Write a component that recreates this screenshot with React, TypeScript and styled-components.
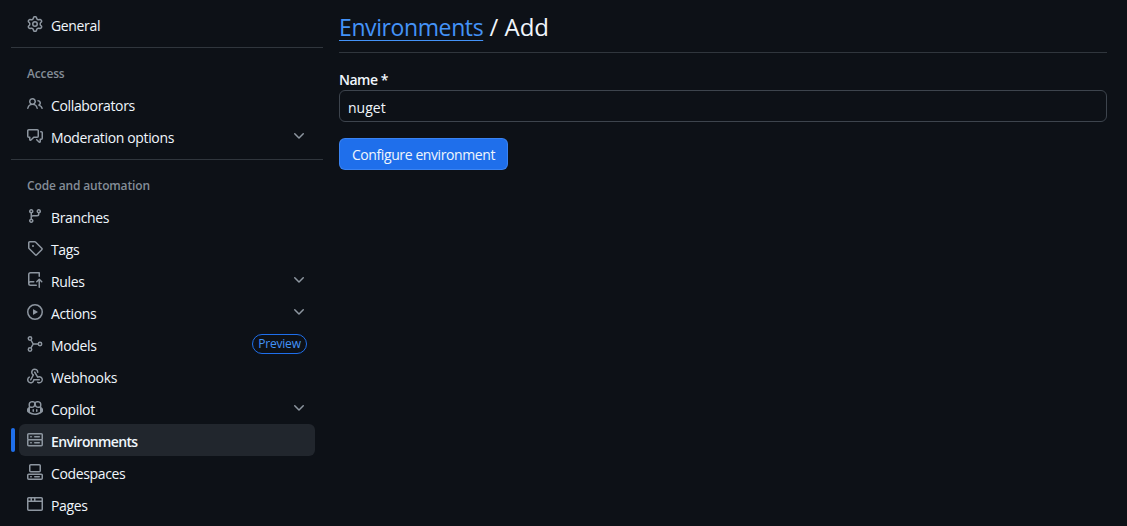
import * as React from 'react';
import styled, { createGlobalStyle } from 'styled-components';

const Global = createGlobalStyle`
  html, body {
    margin: 0;
    height: 100%;
    overflow: hidden;
    background: #0d1117;
  }
  body {
    font-family: "Open Sans", "Liberation Sans", sans-serif;
    font-size: 14px;
    color: #f0f6fc;
  }
`;

const Page = styled.div`
  height: 526px;
  display: flex;
  padding: 8px 20px 0 11px;
  box-sizing: border-box;
  overflow: hidden;
`;

const Sidebar = styled.nav`
  width: 312px;
  flex-shrink: 0;
  display: flex;
  flex-direction: column;
`;

const Divider = styled.div`
  height: 1px;
  flex-shrink: 0;
  background: #30363d;
  margin-top: 7px;
`;

const SectionTitle = styled.div`
  height: 40px;
  flex-shrink: 0;
  padding: 19px 0 0 16px;
  box-sizing: border-box;
  font-size: 12px;
  line-height: 14px;
  font-weight: 600;
  letter-spacing: -0.15px;
  color: #848d97;
`;

const Row = styled.div<{ $active?: boolean }>`
  position: relative;
  height: 32px;
  flex-shrink: 0;
  margin: 0 8px;
  padding: 0 8px;
  display: flex;
  align-items: center;
  gap: 8px;
  border-radius: 6px;
  background: ${(p) => (p.$active ? '#21262d' : 'transparent')};
  font-weight: ${(p) => (p.$active ? 600 : 400)};
  letter-spacing: ${(p) => (p.$active ? '-0.65px' : '-0.35px')};
`;

const ActiveBar = styled.span`
  position: absolute;
  left: -8px;
  top: 4px;
  width: 4px;
  height: 24px;
  border-radius: 6px;
  background: #1f6feb;
`;

const IconSvg = styled.svg`
  width: 16px;
  height: 16px;
  display: block;
  flex-shrink: 0;
  fill: #8d96a0;
`;

const RowLabel = styled.span`
  flex: 1;
  padding-top: 2px;
`;

const PreviewBadge = styled.span`
  height: 20px;
  width: 55px;
  box-sizing: border-box;
  text-align: center;
  line-height: 18px;
  border: 1px solid #1f6feb;
  border-radius: 10px;
  font-size: 12px;
  font-weight: 500;
  letter-spacing: -0.2px;
  color: #4493f8;
`;

const Main = styled.main`
  flex: 1;
  margin-left: 16px;
  margin-top: -8px;
`;

const Heading = styled.h1`
  margin: 0;
  height: 53px;
  box-sizing: border-box;
  padding-top: 9px;
  font-size: 24px;
  line-height: 36px;
  font-weight: 400;
  border-bottom: 1px solid #30363d;
`;

const HeadingLink = styled.a`
  font-size: 23px;
  letter-spacing: -0.4px;
  color: #4493f8;
  text-decoration: underline;
  text-underline-offset: 4px;
  text-decoration-thickness: 1px;
`;

const Form = styled.form`
  padding-top: 17px;
`;

const Label = styled.label`
  display: block;
  font-weight: 600;
  line-height: 20px;
  letter-spacing: -0.5px;
`;

const TextInput = styled.input`
  display: block;
  width: 100%;
  height: 32px;
  box-sizing: border-box;
  padding: 2px 8px 0;
  margin: 0;
  background: #0d1117;
  border: 1px solid #3d444d;
  border-radius: 6px;
  color: #f0f6fc;
  font: inherit;
  outline: none;
`;

const SubmitButton = styled.button`
  display: block;
  margin-top: 16px;
  height: 32px;
  width: 169px;
  padding: 0;
  background: #1f6feb;
  border: 1px solid rgba(110, 170, 255, 0.35);
  border-radius: 6px;
  color: #f0f6fc;
  font: inherit;
  font-weight: 500;
  letter-spacing: -0.4px;
`;

const Icon = ({ d }: { d: string }) => (
  <IconSvg viewBox="0 0 16 16">
    <path d={d} />
  </IconSvg>
);

const ModelsIcon = () => (
  <IconSvg viewBox="0 0 16 16" style={{ fill: 'none', stroke: '#8d96a0', strokeWidth: 1.5 }}>
    <circle cx="3" cy="2.5" r="1.7" />
    <circle cx="3" cy="13.5" r="1.7" />
    <circle cx="13" cy="8" r="1.7" />
    <path d="M3.9 4 6.2 8 3.9 12M6.2 8h5" />
  </IconSvg>
);

const paths = {
  gear: 'M8 0a8.2 8.2 0 0 1 .701.031C9.444.095 9.99.645 10.16 1.29l.288 1.107c.018.066.079.158.212.224.231.114.454.243.668.386.123.082.233.09.299.071l1.103-.303c.644-.176 1.392.021 1.82.63.27.385.506.792.704 1.218.315.675.111 1.422-.364 1.891l-.814.806c-.049.048-.098.147-.088.294.016.257.016.515 0 .772-.01.147.038.246.088.294l.814.806c.475.469.679 1.216.364 1.891a7.977 7.977 0 0 1-.704 1.217c-.428.61-1.176.807-1.82.63l-1.102-.302c-.067-.019-.177-.011-.3.071a5.909 5.909 0 0 1-.668.386c-.133.066-.194.158-.211.224l-.29 1.106c-.168.646-.715 1.196-1.458 1.26a8.006 8.006 0 0 1-1.402 0c-.743-.064-1.289-.614-1.458-1.26l-.289-1.106c-.018-.066-.079-.158-.212-.224a5.738 5.738 0 0 1-.668-.386c-.123-.082-.233-.09-.299-.071l-1.103.303c-.644.176-1.392-.021-1.82-.63a8.12 8.12 0 0 1-.704-1.218c-.315-.675-.111-1.422.363-1.891l.815-.806c.05-.048.098-.147.088-.294a6.214 6.214 0 0 1 0-.772c.01-.147-.038-.246-.088-.294l-.815-.806C.635 6.045.431 5.298.746 4.623a7.92 7.92 0 0 1 .704-1.217c.428-.61 1.176-.807 1.82-.63l1.102.302c.067.019.177.011.3-.071.214-.143.437-.272.668-.386.133-.066.194-.158.211-.224l.29-1.106C6.009.645 6.556.095 7.299.03 7.53.01 7.764 0 8 0Zm-.571 1.525c-.036.003-.108.036-.137.146l-.289 1.105c-.147.561-.549.967-.998 1.189-.173.086-.34.183-.5.29-.417.278-.97.423-1.529.27l-1.103-.303c-.109-.03-.175.016-.195.045-.22.312-.412.644-.573.99-.014.031-.021.11.059.19l.815.806c.411.406.562.957.53 1.456a4.709 4.709 0 0 0 0 .582c.032.499-.119 1.05-.53 1.456l-.815.806c-.081.08-.073.159-.059.19.162.346.353.677.573.989.02.03.085.076.195.046l1.102-.303c.56-.153 1.113-.008 1.53.27.161.107.328.204.501.29.447.222.85.629.997 1.189l.289 1.105c.029.109.101.143.137.146a6.6 6.6 0 0 0 1.142 0c.036-.003.108-.036.137-.146l.289-1.105c.147-.561.549-.967.998-1.189.173-.086.34-.183.5-.29.417-.278.97-.423 1.529-.27l1.103.303c.109.029.175-.016.195-.045.22-.313.411-.644.573-.99.014-.031.021-.11-.059-.19l-.815-.806c-.411-.406-.562-.957-.53-1.456a4.709 4.709 0 0 0 0-.582c-.032-.499.119-1.05.53-1.456l.815-.806c.081-.08.073-.159.059-.19a6.464 6.464 0 0 0-.573-.989c-.02-.03-.085-.076-.195-.046l-1.102.303c-.56.153-1.113.008-1.53-.27a4.44 4.44 0 0 0-.501-.29c-.447-.222-.85-.629-.997-1.189l-.289-1.105c-.029-.11-.101-.143-.137-.146a6.6 6.6 0 0 0-1.142 0ZM11 8a3 3 0 1 1-6 0 3 3 0 0 1 6 0ZM9.5 8a1.5 1.5 0 1 0-3.001.001A1.5 1.5 0 0 0 9.5 8Z',
  people: 'M2 5.5a3.5 3.5 0 1 1 5.898 2.549 5.508 5.508 0 0 1 3.034 4.084.75.75 0 1 1-1.482.235 4 4 0 0 0-7.9 0 .75.75 0 0 1-1.482-.236A5.507 5.507 0 0 1 3.102 8.05 3.493 3.493 0 0 1 2 5.5ZM11 4a3.001 3.001 0 0 1 2.22 5.018 5.01 5.01 0 0 1 2.56 3.012.749.749 0 0 1-.885.954.752.752 0 0 1-.549-.514 3.507 3.507 0 0 0-2.522-2.372.75.75 0 0 1-.574-.73v-.352a.75.75 0 0 1 .416-.672A1.5 1.5 0 0 0 11 5.5.75.75 0 0 1 11 4Zm-5.5-.5a2 2 0 1 0-.001 3.999A2 2 0 0 0 5.5 3.5Z',
  discussion: 'M1.75 1h8.5c.966 0 1.75.784 1.75 1.75v5.5A1.75 1.75 0 0 1 10.25 10H7.061l-2.574 2.573A1.458 1.458 0 0 1 2 11.543V10h-.25A1.75 1.75 0 0 1 0 8.25v-5.5C0 1.784.784 1 1.75 1ZM1.5 2.75v5.5c0 .138.112.25.25.25h1a.75.75 0 0 1 .75.75v2.19l2.72-2.72a.749.749 0 0 1 .53-.22h3.5a.25.25 0 0 0 .25-.25v-5.5a.25.25 0 0 0-.25-.25h-8.5a.25.25 0 0 0-.25.25Zm13 2a.25.25 0 0 0-.25-.25h-.5a.75.75 0 0 1 0-1.5h.5c.966 0 1.75.784 1.75 1.75v5.5A1.75 1.75 0 0 1 14.25 12H14v1.543a1.458 1.458 0 0 1-2.487 1.03L9.22 12.28a.749.749 0 0 1 .326-1.275.749.749 0 0 1 .734.215l2.22 2.22v-2.19a.75.75 0 0 1 .75-.75h1a.25.25 0 0 0 .25-.25Z',
  branch: 'M9.5 3.25a2.25 2.25 0 1 1 3 2.122V6A2.5 2.5 0 0 1 10 8.5H6a1 1 0 0 0-1 1v1.128a2.251 2.251 0 1 1-1.5 0V5.372a2.25 2.25 0 1 1 1.5 0v1.836A2.493 2.493 0 0 1 6 7h4a1 1 0 0 0 1-1v-.628A2.25 2.25 0 0 1 9.5 3.25Zm-6 0a.75.75 0 1 0 1.5 0 .75.75 0 0 0-1.5 0Zm8.25-.75a.75.75 0 1 0 0 1.5.75.75 0 0 0 0-1.5ZM4.25 12a.75.75 0 1 0 0 1.5.75.75 0 0 0 0-1.5Z',
  tag: 'M1 7.775V2.75C1 1.784 1.784 1 2.75 1h5.025c.464 0 .91.184 1.238.513l6.25 6.25a1.75 1.75 0 0 1 0 2.474l-5.026 5.026a1.75 1.75 0 0 1-2.474 0l-6.25-6.25A1.752 1.752 0 0 1 1 7.775Zm1.5 0c0 .066.026.13.073.177l6.25 6.25a.25.25 0 0 0 .354 0l5.025-5.025a.25.25 0 0 0 0-.354l-6.25-6.25a.25.25 0 0 0-.177-.073H2.75a.25.25 0 0 0-.25.25ZM6 5a1 1 0 1 1 0 2 1 1 0 0 1 0-2Z',
  repoPush: 'M1 2.5A2.5 2.5 0 0 1 3.5 0h8.75a.75.75 0 0 1 .75.75v3.5a.75.75 0 0 1-1.5 0V1.5h-8a1 1 0 0 0-1 1v6.708A2.493 2.493 0 0 1 3.5 9h3.25a.75.75 0 0 1 0 1.5H3.5a1 1 0 0 0 0 2h5.75a.75.75 0 0 1 0 1.5H3.5A2.5 2.5 0 0 1 1 11.5Zm13.23 7.79h-.001l-1.224-1.224v6.184a.75.75 0 0 1-1.5 0V9.066L10.28 10.29a.75.75 0 0 1-1.06-1.061l2.505-2.504a.75.75 0 0 1 1.06 0L15.29 9.23a.751.751 0 0 1-.018 1.042.751.751 0 0 1-1.042.018Z',
  play: 'M8 0a8 8 0 1 1 0 16A8 8 0 0 1 8 0ZM1.5 8a6.5 6.5 0 1 0 13 0 6.5 6.5 0 0 0-13 0Zm4.879-2.773 4.264 2.559a.25.25 0 0 1 0 .428l-4.264 2.559A.25.25 0 0 1 6 10.559V5.442a.25.25 0 0 1 .379-.215Z',
  webhook: 'M5.5 4.25a2.25 2.25 0 0 1 4.5 0 .75.75 0 0 0 1.5 0 3.75 3.75 0 1 0-6.14 2.889l-2.272 4.258a.75.75 0 0 0 1.324.706L7 7.25a.75.75 0 0 0-.309-1.015A2.25 2.25 0 0 1 5.5 4.25ZM7.364 3.607a.75.75 0 0 1 1.03.257l2.608 4.349a3.75 3.75 0 1 1-.628 6.785.75.75 0 0 1 .752-1.299 2.25 2.25 0 1 0-.033-3.88.75.75 0 0 1-1.03-.256L7.107 4.636a.75.75 0 0 1 .257-1.03ZM2.9 8.776A.75.75 0 0 1 2.625 9.8 2.25 2.25 0 1 0 6 11.75a.75.75 0 0 1 .75-.751h5.5a.75.75 0 0 1 0 1.5H7.425a3.751 3.751 0 1 1-5.55-3.998.75.75 0 0 1 1.024.274Z',
  copilot: 'M7.998 15.035c-4.562 0-7.873-2.914-7.998-3.749V9.338c.085-.628.677-1.686 1.588-2.065.013-.07.024-.143.036-.218.029-.183.06-.384.126-.612-.201-.508-.254-1.084-.254-1.656 0-.87.128-1.769.693-2.484.579-.733 1.494-1.124 2.724-1.261 1.206-.134 2.262.034 2.944.765.05.053.096.108.139.165.044-.057.094-.112.143-.165.682-.731 1.738-.899 2.944-.765 1.23.137 2.145.528 2.724 1.261.566.715.693 1.614.693 2.484 0 .572-.053 1.148-.254 1.656.066.228.098.429.126.612.012.076.024.148.037.218.924.385 1.522 1.471 1.591 2.095v1.872c0 .766-3.351 3.795-8.002 3.795Zm0-1.485c2.28 0 4.584-1.11 5.002-1.433V7.862l-.023-.116c-.49.21-1.075.291-1.727.291-1.146 0-2.059-.327-2.71-.991A3.222 3.222 0 0 1 8 6.303a3.24 3.24 0 0 1-.544.743c-.65.664-1.563.991-2.71.991-.652 0-1.236-.081-1.727-.291l-.023.116v4.255c.419.323 2.722 1.433 5.002 1.433ZM6.762 2.83c-.193-.206-.637-.413-1.682-.297-1.019.113-1.479.404-1.713.7-.247.312-.369.789-.369 1.554 0 .793.129 1.171.308 1.371.162.181.519.379 1.442.379.853 0 1.339-.235 1.638-.54.315-.322.527-.827.617-1.553.117-.935-.037-1.395-.241-1.614Zm4.155-.297c-1.044-.116-1.488.091-1.681.297-.204.219-.359.679-.242 1.614.091.726.303 1.231.618 1.553.299.305.784.54 1.638.54.922 0 1.28-.198 1.442-.379.179-.2.308-.578.308-1.371 0-.765-.123-1.242-.37-1.554-.233-.296-.693-.587-1.713-.7ZM6.25 9.037a.75.75 0 0 1 .75.75v1.501a.75.75 0 0 1-1.5 0V9.787a.75.75 0 0 1 .75-.75Zm4.25.75v1.501a.75.75 0 0 1-1.5 0V9.787a.75.75 0 0 1 1.5 0Z',
  server: 'M1.75 1h12.5c.966 0 1.75.784 1.75 1.75v4c0 .372-.116.717-.314 1 .198.283.314.628.314 1v4a1.75 1.75 0 0 1-1.75 1.75H1.75A1.75 1.75 0 0 1 0 12.75v-4c0-.358.109-.707.314-1a1.739 1.739 0 0 1-.314-1v-4C0 1.784.784 1 1.75 1ZM1.5 2.75v4c0 .138.112.25.25.25h12.5a.25.25 0 0 0 .25-.25v-4a.25.25 0 0 0-.25-.25H1.75a.25.25 0 0 0-.25.25Zm.25 5.75a.25.25 0 0 0-.25.25v4c0 .138.112.25.25.25h12.5a.25.25 0 0 0 .25-.25v-4a.25.25 0 0 0-.25-.25ZM7 4.75A.75.75 0 0 1 7.75 4h4.5a.75.75 0 0 1 0 1.5h-4.5A.75.75 0 0 1 7 4.75ZM7.75 10h4.5a.75.75 0 0 1 0 1.5h-4.5a.75.75 0 0 1 0-1.5ZM3 4.75A.75.75 0 0 1 3.75 4h.5a.75.75 0 0 1 0 1.5h-.5A.75.75 0 0 1 3 4.75ZM3.75 10h.5a.75.75 0 0 1 0 1.5h-.5a.75.75 0 0 1 0-1.5Z',
  codespaces: 'M0 11.25c0-.966.784-1.75 1.75-1.75h12.5c.966 0 1.75.784 1.75 1.75v3A1.75 1.75 0 0 1 14.25 16H1.75A1.75 1.75 0 0 1 0 14.25Zm2-9.5C2 .784 2.784 0 3.75 0h8.5C13.216 0 14 .784 14 1.75v5a1.75 1.75 0 0 1-1.75 1.75h-8.5A1.75 1.75 0 0 1 2 6.75Zm1.75-.25a.25.25 0 0 0-.25.25v5c0 .138.112.25.25.25h8.5a.25.25 0 0 0 .25-.25v-5a.25.25 0 0 0-.25-.25Zm-2 9.5a.25.25 0 0 0-.25.25v3c0 .138.112.25.25.25h12.5a.25.25 0 0 0 .25-.25v-3a.25.25 0 0 0-.25-.25ZM7 12.75a.75.75 0 0 1 .75-.75h4.5a.75.75 0 0 1 0 1.5h-4.5a.75.75 0 0 1-.75-.75Zm-4 0a.75.75 0 0 1 .75-.75h.5a.75.75 0 0 1 0 1.5h-.5a.75.75 0 0 1-.75-.75Z',
  browser: 'M0 2.75C0 1.784.784 1 1.75 1h12.5c.966 0 1.75.784 1.75 1.75v10.5A1.75 1.75 0 0 1 14.25 15H1.75A1.75 1.75 0 0 1 0 13.25ZM14.5 6h-13v7.25c0 .138.112.25.25.25h12.5a.25.25 0 0 0 .25-.25Zm-6-3.5v2h6V2.75a.25.25 0 0 0-.25-.25ZM5 2.5v2h2v-2Zm-3.25 0a.25.25 0 0 0-.25.25V4.5h2v-2Z',
  chevron: 'M12.78 5.22a.749.749 0 0 1 0 1.06l-4.25 4.25a.749.749 0 0 1-1.06 0L3.22 6.28a.749.749 0 1 1 1.06-1.06L8 8.939l3.72-3.719a.749.749 0 0 1 1.06 0Z',
};

type Item = {
  label: string;
  icon: React.ReactNode;
  chevron?: boolean;
  preview?: boolean;
  active?: boolean;
};

const accessItems: Item[] = [
  { label: 'Collaborators', icon: <Icon d={paths.people} /> },
  { label: 'Moderation options', icon: <Icon d={paths.discussion} />, chevron: true },
];

const automationItems: Item[] = [
  { label: 'Branches', icon: <Icon d={paths.branch} /> },
  { label: 'Tags', icon: <Icon d={paths.tag} /> },
  { label: 'Rules', icon: <Icon d={paths.repoPush} />, chevron: true },
  { label: 'Actions', icon: <Icon d={paths.play} />, chevron: true },
  { label: 'Models', icon: <ModelsIcon />, preview: true },
  { label: 'Webhooks', icon: <Icon d={paths.webhook} /> },
  { label: 'Copilot', icon: <Icon d={paths.copilot} />, chevron: true },
  { label: 'Environments', icon: <Icon d={paths.server} />, active: true },
  { label: 'Codespaces', icon: <Icon d={paths.codespaces} /> },
  { label: 'Pages', icon: <Icon d={paths.browser} /> },
];

const NavRow = ({ item }: { item: Item }) => (
  <Row $active={item.active}>
    {item.active && <ActiveBar />}
    {item.icon}
    <RowLabel>{item.label}</RowLabel>
    {item.preview && <PreviewBadge>Preview</PreviewBadge>}
    {item.chevron && <Icon d={paths.chevron} />}
  </Row>
);

export default function App() {
  return (
    <Page>
      <Global />
      <Sidebar>
        <NavRow item={{ label: 'General', icon: <Icon d={paths.gear} /> }} />
        <Divider />
        <SectionTitle>Access</SectionTitle>
        {accessItems.map((item) => (
          <NavRow key={item.label} item={item} />
        ))}
        <Divider />
        <SectionTitle>Code and automation</SectionTitle>
        {automationItems.map((item) => (
          <NavRow key={item.label} item={item} />
        ))}
      </Sidebar>
      <Main>
        <Heading>
          <HeadingLink>Environments</HeadingLink> / Add
        </Heading>
        <Form onSubmit={(e) => e.preventDefault()}>
          <Label>Name *</Label>
          <TextInput defaultValue="nuget" />
          <SubmitButton>Configure environment</SubmitButton>
        </Form>
      </Main>
    </Page>
  );
}
